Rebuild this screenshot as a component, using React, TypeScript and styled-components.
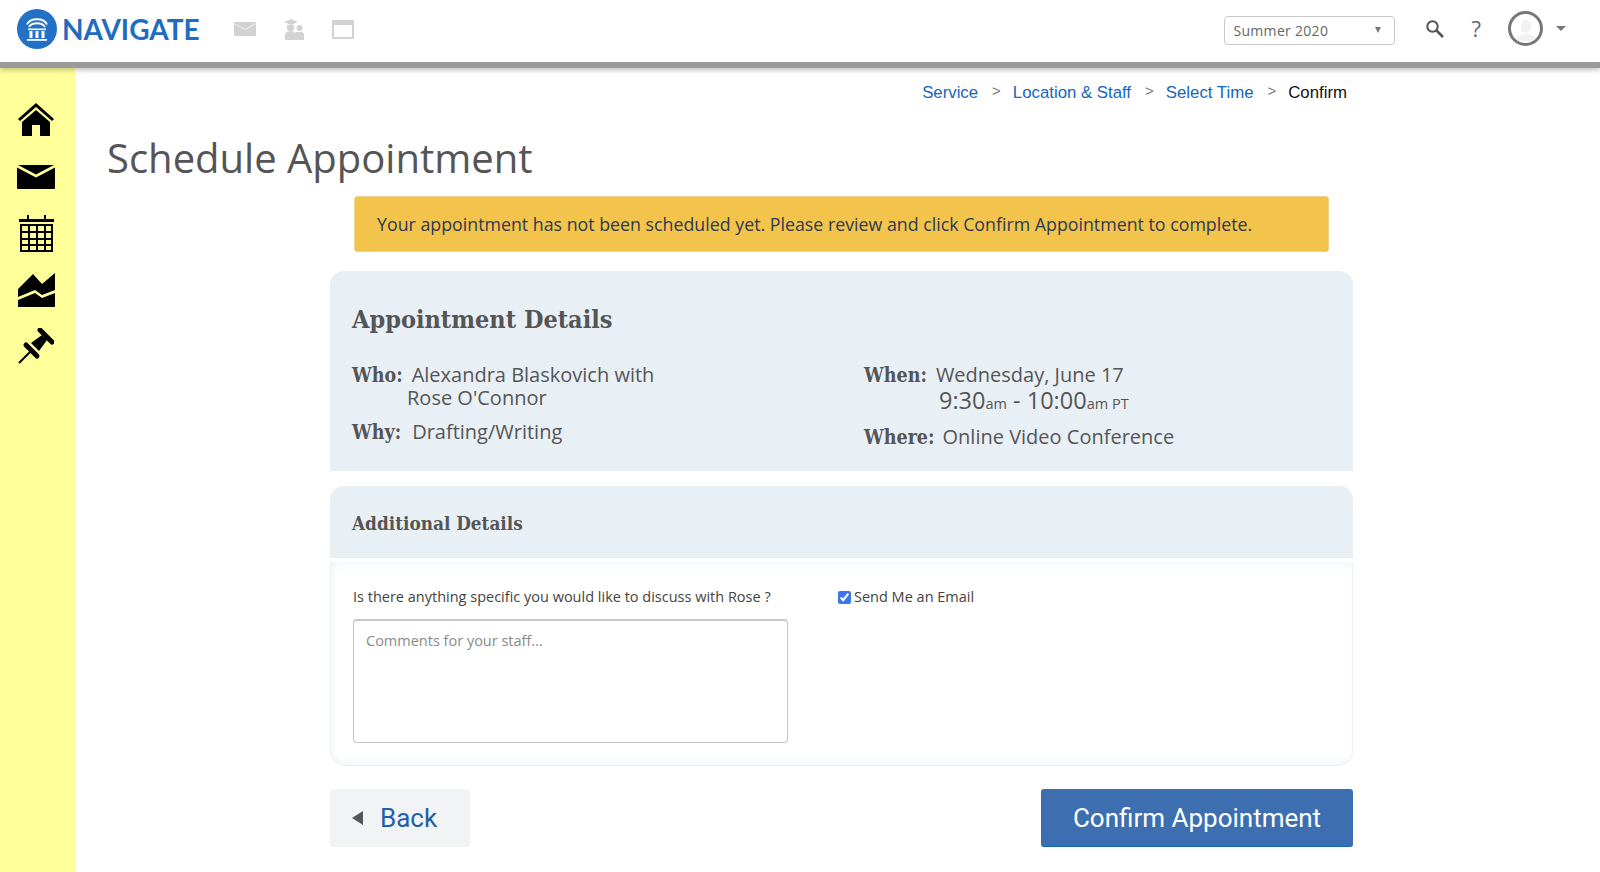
import {FC} from 'react';
import styled, {createGlobalStyle} from 'styled-components';

const sans = `"Open Sans", "Noto Sans", sans-serif`;
const slab = `"DejaVu Serif Condensed", "DejaVu Serif", "Liberation Serif", serif`;

const crumbs: { name: string, active?: boolean }[] = [
    {name: 'Service'},
    {name: 'Location & Staff'},
    {name: 'Select Time'},
    {name: 'Confirm', active: true},
];

const App: FC = () => {
    return (
        <Page>
            <GlobalStyle/>
            <Header>
                <LeftSide>
                    <LogoMark viewBox="0 0 40 40">
                        <circle cx="20" cy="20" r="20" fill="#2371c6"/>
                        <path d="M10 15.500 C13 8.500 27 8.500 30 15.500 M12 18 C15 13 25 13 28 18" stroke="#fff"
                              strokeWidth="1.800" fill="none"/>
                        <path d="M11 19.500h18v1.600H11z" fill="#fff"/>
                        <path d="M12.500 22h3v7h-3zM18.500 22h3v7h-3zM24.500 22h3v7h-3z" fill="#fff"/>
                        <path d="M10 30h20v1.800H10z" fill="#fff"/>
                    </LogoMark>
                    <LogoText>NAVIGATE</LogoText>
                    <QuickIcons>
                        <svg width="22" height="14" viewBox="0 0 22 14">
                            <path d="M0 0h22v14H0z" fill="#d2d2d2"/>
                            <path d="M0 1.500l11 6 11-6" stroke="#f0f0f0" strokeWidth="1" fill="none"/>
                        </svg>
                        <svg width="20" height="21" viewBox="0 0 20 21">
                            <path d="M0 3l7-3 7 3-7 3z M3 6h7v3a3.500 3.500 0 0 1-7 0z M1 21v-5c0-2 2-3.500 5-3.500h2c2 0 3.500 1.500 3.500 3.500v5z"
                                  fill="#d2d2d2"/>
                            <path d="M12.500 9a3 3 0 1 1 6 0a3 3 0 1 1-6 0z M11 21v-7c0-1 1.500-1 3-1h3c2 0 3 1 3 3v5z"
                                  fill="#d2d2d2"/>
                        </svg>
                        <svg width="22" height="19" viewBox="0 0 22 19">
                            <path d="M0 0h22v19H0z M2 5v12h18V5z" fill="#d2d2d2" fillRule="evenodd"/>
                        </svg>
                    </QuickIcons>
                </LeftSide>
                <RightSide>
                    <TermSelect>
                        <span>Summer 2020</span>
                        <Caret/>
                    </TermSelect>
                    <svg width="20" height="20" viewBox="0 0 20 20">
                        <circle cx="7.500" cy="7.500" r="5.200" stroke="#555" strokeWidth="2" fill="none"/>
                        <path d="M11.500 11.500L18 18" stroke="#555" strokeWidth="2.600"/>
                    </svg>
                    <Help>?</Help>
                    <Avatar>
                        <svg width="28" height="28" viewBox="0 0 28 28">
                            <path d="M14 5a5 6 0 0 1 0 13a5 6 0 0 1 0-13z M4 26c0-5 5-7 10-7s10 2 10 7z" fill="#f1f1f1"/>
                        </svg>
                    </Avatar>
                    <AvatarCaret/>
                </RightSide>
            </Header>
            <Body>
                <SideNav>
                    <NavItem>
                        <svg width="36" height="34" viewBox="0 0 36 34">
                            <path d="M18 0L36 16l-2 2L18 4 2 18l-2-2z" fill="#000"/>
                            <path d="M18 7L32 19v14H22V22h-8v11H4V19z" fill="#000"/>
                        </svg>
                    </NavItem>
                    <NavItem>
                        <svg width="38" height="24" viewBox="0 0 38 24">
                            <path d="M1 0h36L19 9.500z M0 2.500l19 10 19-10V23a1 1 0 0 1-1 1H1a1 1 0 0 1-1-1z" fill="#000"/>
                        </svg>
                    </NavItem>
                    <NavItem>
                        <svg width="35" height="37" viewBox="0 0 35 37">
                            <path d="M8 0h2v5H8zM25 0h2v5h-2z" fill="#000"/>
                            <path d="M0 4h35v3H0z" fill="#000"/>
                            <path d="M1 9h33v28H1z" fill="#000"/>
                            <path
                                d="M3 11h6v5H3zM11 11h6v5h-6zM19 11h6v5h-6zM27 11h5v5h-5zM3 18h6v5H3zM11 18h6v5h-6zM19 18h6v5h-6zM27 18h5v5h-5zM3 25h6v4H3zM11 25h6v4h-6zM19 25h6v4h-6zM27 25h5v4h-5zM3 31h6v4H3zM11 31h6v4h-6zM19 31h6v4h-6zM27 31h5v4h-5z"
                                fill="#ffff99"/>
                        </svg>
                    </NavItem>
                    <NavItem>
                        <svg width="37" height="34" viewBox="0 0 37 34">
                            <path d="M0 16L15 1l9 10L37 0v17l-13 5-7-5L0 24z" fill="#000"/>
                            <path d="M0 27l17-7 7 5 13-5v14H0z" fill="#000"/>
                        </svg>
                    </NavItem>
                    <NavItem>
                        <svg width="36" height="36" viewBox="0 0 36 36">
                            <path d="M1 35l11-11" stroke="#000" strokeWidth="2"/>
                            <path d="M8 17l11 11" stroke="#000" strokeWidth="5" strokeLinecap="round"/>
                            <path d="M13 15L24 7l5 5-8 11z" fill="#000"/>
                            <path d="M22 2l12 12" stroke="#000" strokeWidth="5" strokeLinecap="round"/>
                        </svg>
                    </NavItem>
                </SideNav>
                <Main>
                    <Breadcrumbs>
                        {crumbs.map(({name, active}, idx) => (
                            <Crumb key={idx}>
                                {idx > 0 ? <CrumbSep>&gt;</CrumbSep> : null}
                                <CrumbLabel $active={active}>{name}</CrumbLabel>
                            </Crumb>
                        ))}
                    </Breadcrumbs>
                    <Title>Schedule Appointment</Title>
                    <Content>
                        <Banner>Your appointment has not been scheduled yet. Please review and click Confirm
                            Appointment to complete.</Banner>
                        <DetailsCard>
                            <CardTitle>Appointment Details</CardTitle>
                            <DetailsGrid>
                                <DetailColumn $gap={13}>
                                    <Detail>
                                        <Term>Who:</Term>Alexandra Blaskovich with
                                        <ContinuedLine>Rose O'Connor</ContinuedLine>
                                    </Detail>
                                    <Detail><Term $gap={11}>Why:</Term>Drafting/Writing</Detail>
                                </DetailColumn>
                                <DetailColumn $gap={9}>
                                    <Detail>
                                        <Term>When:</Term>Wednesday, June 17
                                        <TimeLine>9:30<small>am</small> - 10:00<small>am PT</small></TimeLine>
                                    </Detail>
                                    <Detail><Term $gap={8}>Where:</Term>Online Video Conference</Detail>
                                </DetailColumn>
                            </DetailsGrid>
                        </DetailsCard>
                        <AdditionalHeader>Additional Details</AdditionalHeader>
                        <AdditionalBody>
                            <CommentColumn>
                                <FieldLabel>Is there anything specific you would like to discuss with Rose ?</FieldLabel>
                                <Comments placeholder="Comments for your staff..."/>
                            </CommentColumn>
                            <EmailOption>
                                <input type="checkbox" defaultChecked/>
                                Send Me an Email
                            </EmailOption>
                        </AdditionalBody>
                        <Actions>
                            <BackButton><BackArrow/>Back</BackButton>
                            <ConfirmButton>Confirm Appointment</ConfirmButton>
                        </Actions>
                    </Content>
                </Main>
            </Body>
        </Page>
    );
};

const GlobalStyle = createGlobalStyle`
  * {
    box-sizing: border-box;
  }

  body {
    margin: 0;
    background: #fff;
    font-family: ${sans};
    overflow: hidden;
  }
`

const Page = styled.div`
  width: 1600px;
  height: 872px;
  display: flex;
  flex-direction: column;
  overflow: hidden;
`

const Header = styled.div`
  height: 68px;
  flex-shrink: 0;
  display: flex;
  justify-content: space-between;
  align-items: flex-start;
  padding: 9px 34px 0 17px;
  background: #fff;
  border-bottom: 6px solid #9a9a9a;
  box-shadow: 0 2px 5px rgba(0, 0, 0, .25);
  position: relative;
  z-index: 2;
`

const LeftSide = styled.div`
  display: flex;
  align-items: center;
`

const LogoMark = styled.svg`
  width: 40px;
  height: 40px;
`

const LogoText = styled.div`
  margin: -1px 0 0 5px;
  font-family: Lato, sans-serif;
  font-size: 28px;
  font-weight: 700;
  color: #1f6cc0;
`

const QuickIcons = styled.div`
  display: flex;
  align-items: center;
  gap: 28px;
  margin-left: 34px;
`

const RightSide = styled.div`
  display: flex;
  align-items: center;
  margin-top: 4px;

  > svg {
    margin-left: 30px;
    margin-top: -2px;
  }
`

const TermSelect = styled.div`
  width: 171px;
  height: 29px;
  margin-top: 1px;
  display: flex;
  align-items: center;
  justify-content: space-between;
  padding: 0 13px 0 9px;
  border: 1px solid #c9c9c9;
  border-radius: 4px;
  font-size: 14px;
  letter-spacing: .3px;
  color: #666;
`

const Caret = styled.span`
  border-left: 3.500px solid transparent;
  border-right: 3.500px solid transparent;
  border-top: 6px solid #777;
`

const Help = styled.div`
  margin-left: 27px;
  margin-top: -4px;
  font-size: 22px;
  color: #666;
`

const Avatar = styled.div`
  width: 35px;
  height: 35px;
  margin-left: 27px;
  margin-top: -2px;
  display: flex;
  align-items: center;
  justify-content: center;
  border: 3px solid #777;
  border-radius: 50%;
  overflow: hidden;
`

const AvatarCaret = styled.span`
  margin-left: 13px;
  margin-top: -3px;
  border-left: 5px solid transparent;
  border-right: 5px solid transparent;
  border-top: 5px solid #777;
`

const Body = styled.div`
  flex: 1;
  display: flex;
  min-height: 0;
`

const SideNav = styled.div`
  width: 75px;
  flex-shrink: 0;
  padding: 24px 3px 0 0;
  background: #ffff99;
`

const NavItem = styled.div`
  height: 56.500px;
  display: flex;
  align-items: center;
  justify-content: center;
`

const Main = styled.div`
  flex: 1;
  min-width: 0;
`

const Breadcrumbs = styled.div`
  display: flex;
  justify-content: flex-end;
  padding: 15px 253px 0 0;
  font-family: "Liberation Sans", Arial, sans-serif;
  font-size: 16.800px;
  line-height: 20px;
`

const Crumb = styled.div`
  display: flex;
`

const CrumbSep = styled.span`
  margin: -2px 12px 0 14px;
  color: #777;
  font-size: 15px;
`

const CrumbLabel = styled.span<{ $active?: boolean }>`
  color: ${({$active}) => ($active ? '#111' : '#1565c0')};
`

const Title = styled.h1`
  margin: 27px 0 0 32px;
  font-size: 40px;
  line-height: 56px;
  font-weight: 400;
  color: #555;
`

const Content = styled.div`
  width: 1023px;
  margin-left: 255px;
`

const Banner = styled.div`
  height: 56px;
  margin: 10px 24px 19px;
  padding: 0 22px;
  display: flex;
  align-items: center;
  background: #f3c44b;
  border: 1px solid #f0d289;
  border-radius: 3px;
  font-size: 17.800px;
  color: #2e3a52;
  white-space: nowrap;
`

const DetailsCard = styled.div`
  height: 200px;
  padding: 33px 22px 0;
  background: #e9f0f5;
  border-radius: 14px 14px 0 0;
  color: #555;
`

const CardTitle = styled.h2`
  margin: 0;
  font-family: ${slab};
  font-size: 25px;
  line-height: 32px;
  font-weight: 700;
`

const DetailsGrid = styled.div`
  display: grid;
  grid-template-columns: 512px 1fr;
  margin-top: 28px;
`

const DetailColumn = styled.div<{ $gap: number }>`
  display: flex;
  flex-direction: column;
  gap: ${({$gap}) => $gap}px;
`

const Detail = styled.div`
  font-size: 20px;
  line-height: 21.500px;
`

const Term = styled.b<{ $gap?: number }>`
  margin-right: ${({$gap = 9}) => $gap}px;
  font-family: ${slab};
  font-size: 19.500px;
`

const ContinuedLine = styled.div`
  padding-left: 55px;
`

const TimeLine = styled.div`
  padding-left: 75px;
  font-size: 23.500px;
  line-height: 26px;

  small {
    font-size: 14.500px;
  }
`

const AdditionalHeader = styled.div`
  height: 72px;
  margin-top: 15px;
  padding: 2px 22px 0;
  display: flex;
  align-items: center;
  background: #e9f0f5;
  border-radius: 14px 14px 0 0;
  font-family: ${slab};
  font-size: 18.800px;
  font-weight: 700;
  color: #555;
`

const AdditionalBody = styled.div`
  height: 204px;
  margin-top: 4px;
  padding: 25px 22px 0;
  display: flex;
  gap: 50px;
  border: 1px solid #eef2f7;
  border-top: none;
  border-radius: 0 0 14px 14px;
  box-shadow: inset 0 8px 10px -6px #eef3f8, inset 6px 0 8px -6px #eef3f8, inset 0 -8px 10px -6px #eef3f8;
`

const CommentColumn = styled.div`
  width: 435px;
  display: flex;
  flex-direction: column;
  gap: 12px;
`

const FieldLabel = styled.div`
  font-size: 14.500px;
  line-height: 20px;
  color: #444;
  white-space: nowrap;
`

const Comments = styled.textarea`
  width: 435px;
  height: 124px;
  padding: 10px 12px;
  border: 1px solid #c4c4c4;
  border-top: 2px solid #c9c9c9;
  border-radius: 4px;
  resize: none;
  outline: none;
  font-family: ${sans};
  font-size: 14.500px;

  &::placeholder {
    color: #8a8a8a;
  }
`

const EmailOption = styled.label`
  display: flex;
  align-items: flex-start;
  font-size: 14.500px;
  line-height: 20px;
  color: #444;

  input {
    width: 13px;
    height: 13px;
    margin: 4px 3px 0 0;
    accent-color: #3b78e7;
  }
`

const Actions = styled.div`
  display: flex;
  justify-content: space-between;
  margin-top: 23px;
`

const BackButton = styled.button`
  width: 140px;
  height: 58px;
  padding: 0 0 0 22px;
  display: flex;
  align-items: center;
  gap: 17px;
  background: #f2f3f5;
  border: none;
  border-radius: 3px;
  font-family: Roboto, sans-serif;
  font-size: 26px;
  color: #1d5fa8;
`

const BackArrow = styled.span`
  border-top: 7px solid transparent;
  border-bottom: 7px solid transparent;
  border-right: 11px solid #555;
`

const ConfirmButton = styled.button`
  width: 312px;
  height: 58px;
  background: #3d6eb0;
  border: none;
  border-bottom: 1px solid #1565b5;
  border-radius: 3px;
  font-family: Roboto, sans-serif;
  font-size: 26px;
  color: #fff;
`

export default App;
